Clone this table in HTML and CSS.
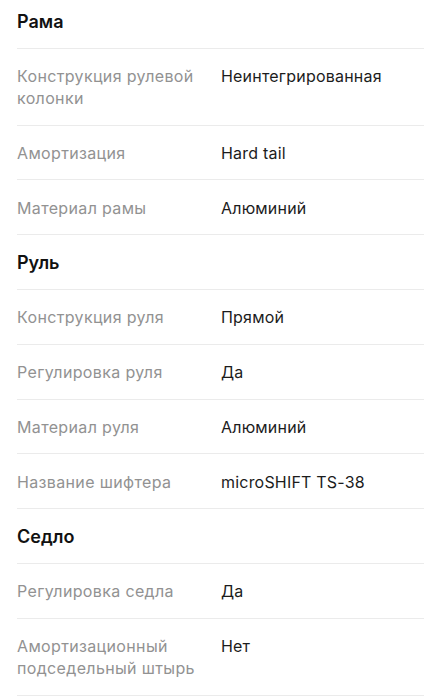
FILE: index.html
```html
<!DOCTYPE html>
<html lang="ru">
<head>
<meta charset="utf-8">
<link rel="stylesheet" href="styles.css">
</head>
<body>
<div class="specs">
  <div class="item heading first">Рама</div>
  <div class="item row"><div class="label">Конструкция рулевой колонки</div><div class="value">Неинтегрированная</div></div>
  <div class="item row"><div class="label">Амортизация</div><div class="value">Hard tail</div></div>
  <div class="item row"><div class="label">Материал рамы</div><div class="value">Алюминий</div></div>
  <div class="item heading">Руль</div>
  <div class="item row"><div class="label">Конструкция руля</div><div class="value">Прямой</div></div>
  <div class="item row"><div class="label">Регулировка руля</div><div class="value">Да</div></div>
  <div class="item row"><div class="label">Материал руля</div><div class="value">Алюминий</div></div>
  <div class="item row"><div class="label">Название шифтера</div><div class="value">microSHIFT TS-38</div></div>
  <div class="item heading">Седло</div>
  <div class="item row"><div class="label">Регулировка седла</div><div class="value">Да</div></div>
  <div class="item row"><div class="label">Амортизационный подседельный штырь</div><div class="value">Нет</div></div>
</div>
</body>
</html>
```

FILE: styles.css
```css
html, body {
  margin: 0;
  padding: 0;
  background: #ffffff;
}
body {
  font-family: Inter, "Noto Sans", sans-serif;
  color: #1a1a1a;
}
.specs {
  padding: 0 17px;
}
.item {
  border-bottom: 1px solid #ebebeb;
  padding: 16.5px 0 15.3px;
  line-height: 22px;
  font-size: 16px;
}
.heading {
  font-size: 18px;
  font-weight: 600;
  color: #111111;
}
.heading.first {
  padding-top: 10.5px;
}
.row {
  display: grid;
  grid-template-columns: 204px 1fr;
}
.label {
  color: #929292;
  padding-right: 8px;
  letter-spacing: 0.35px;
}
.value {
  color: #1c1c1c;
  letter-spacing: 0.2px;
}
```
